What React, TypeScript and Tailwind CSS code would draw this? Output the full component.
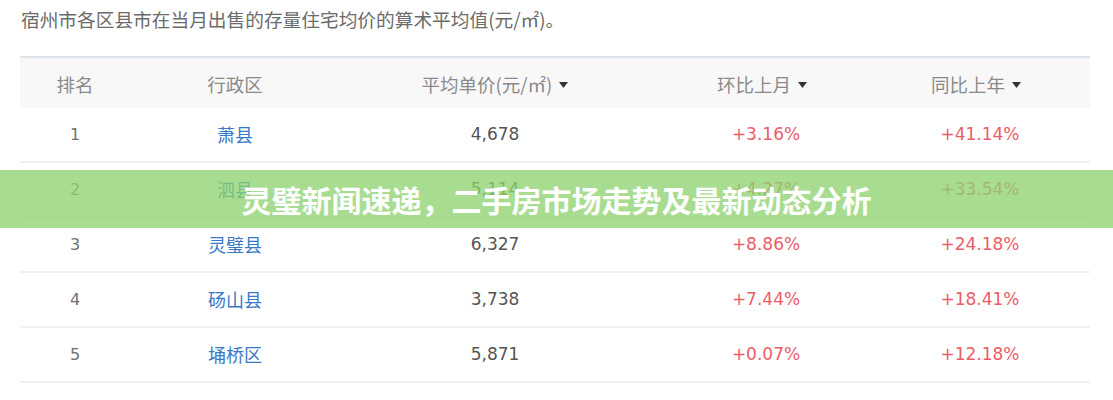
import React from "react";

const rows = [
  { rank: 1, name: "萧县", price: "4,678", mom: "+3.16%", yoy: "+41.14%" },
  { rank: 2, name: "泗县", price: "5,114", mom: "+4.27%", yoy: "+33.54%" },
  { rank: 3, name: "灵璧县", price: "6,327", mom: "+8.86%", yoy: "+24.18%" },
  { rank: 4, name: "砀山县", price: "3,738", mom: "+7.44%", yoy: "+18.41%" },
  { rank: 5, name: "埇桥区", price: "5,871", mom: "+0.07%", yoy: "+12.18%" },
];

const Caret = () => (
  <svg width="9" height="6" viewBox="0 0 9 6" className="ml-[7px] inline-block">
    <polygon points="0,0 9,0 4.5,6" fill="#333" />
  </svg>
);

const cols = "grid grid-cols-[110px_210px_310px_224px_204px] items-center text-center";

export default function App() {
  return (
    <div className="relative w-[1113px] h-[400px] bg-white overflow-hidden font-['Noto_Sans_CJK_SC',sans-serif]">
      <div className="h-[56px] pl-[21px] pt-[9px] text-[18.7px] leading-[20px] text-[#6b6b6b]">
        宿州市各区县市在当月出售的存量住宅均价的算术平均值(元/㎡)。
      </div>

      <div className="ml-[20px] w-[1070px] border-t-2 border-[#dde3ea]">
        <div className={`${cols} h-[50px] bg-[#f8f8f8] text-[18.5px] text-[#8a8a8a] pt-[4px]`}>
          <div>排名</div>
          <div>行政区</div>
          <div className="flex items-center justify-center">
            平均单价(元/㎡)
            <Caret />
          </div>
          <div className="flex items-center justify-center">
            环比上月
            <Caret />
          </div>
          <div className="flex items-center justify-center">
            同比上年
            <Caret />
          </div>
        </div>

        {rows.map((r) => (
          <div key={r.rank} className={`${cols} h-[55px] border-b-2 border-[#f1f1f1]`}>
            <div className="font-['DejaVu_Sans',sans-serif] text-[16px] text-[#707070]">{r.rank}</div>
            <div className="text-[18px] text-[#3a78c9]">{r.name}</div>
            <div className="font-['DejaVu_Sans',sans-serif] text-[17px] text-[#555]">{r.price}</div>
            <div className="font-['DejaVu_Sans',sans-serif] text-[17px] text-[#ec5c68] pl-[8px]">{r.mom}</div>
            <div className="font-['DejaVu_Sans',sans-serif] text-[17px] text-[#ec5c68] pl-[8px]">{r.yoy}</div>
          </div>
        ))}
      </div>

      <div className="absolute left-0 right-0 top-[170px] h-[58px] flex items-center justify-center bg-[rgba(140,210,110,0.76)]">
        <span className="text-[30px] leading-none font-bold text-white">
          灵璧新闻速递，二手房市场走势及最新动态分析
        </span>
      </div>
    </div>
  );
}
